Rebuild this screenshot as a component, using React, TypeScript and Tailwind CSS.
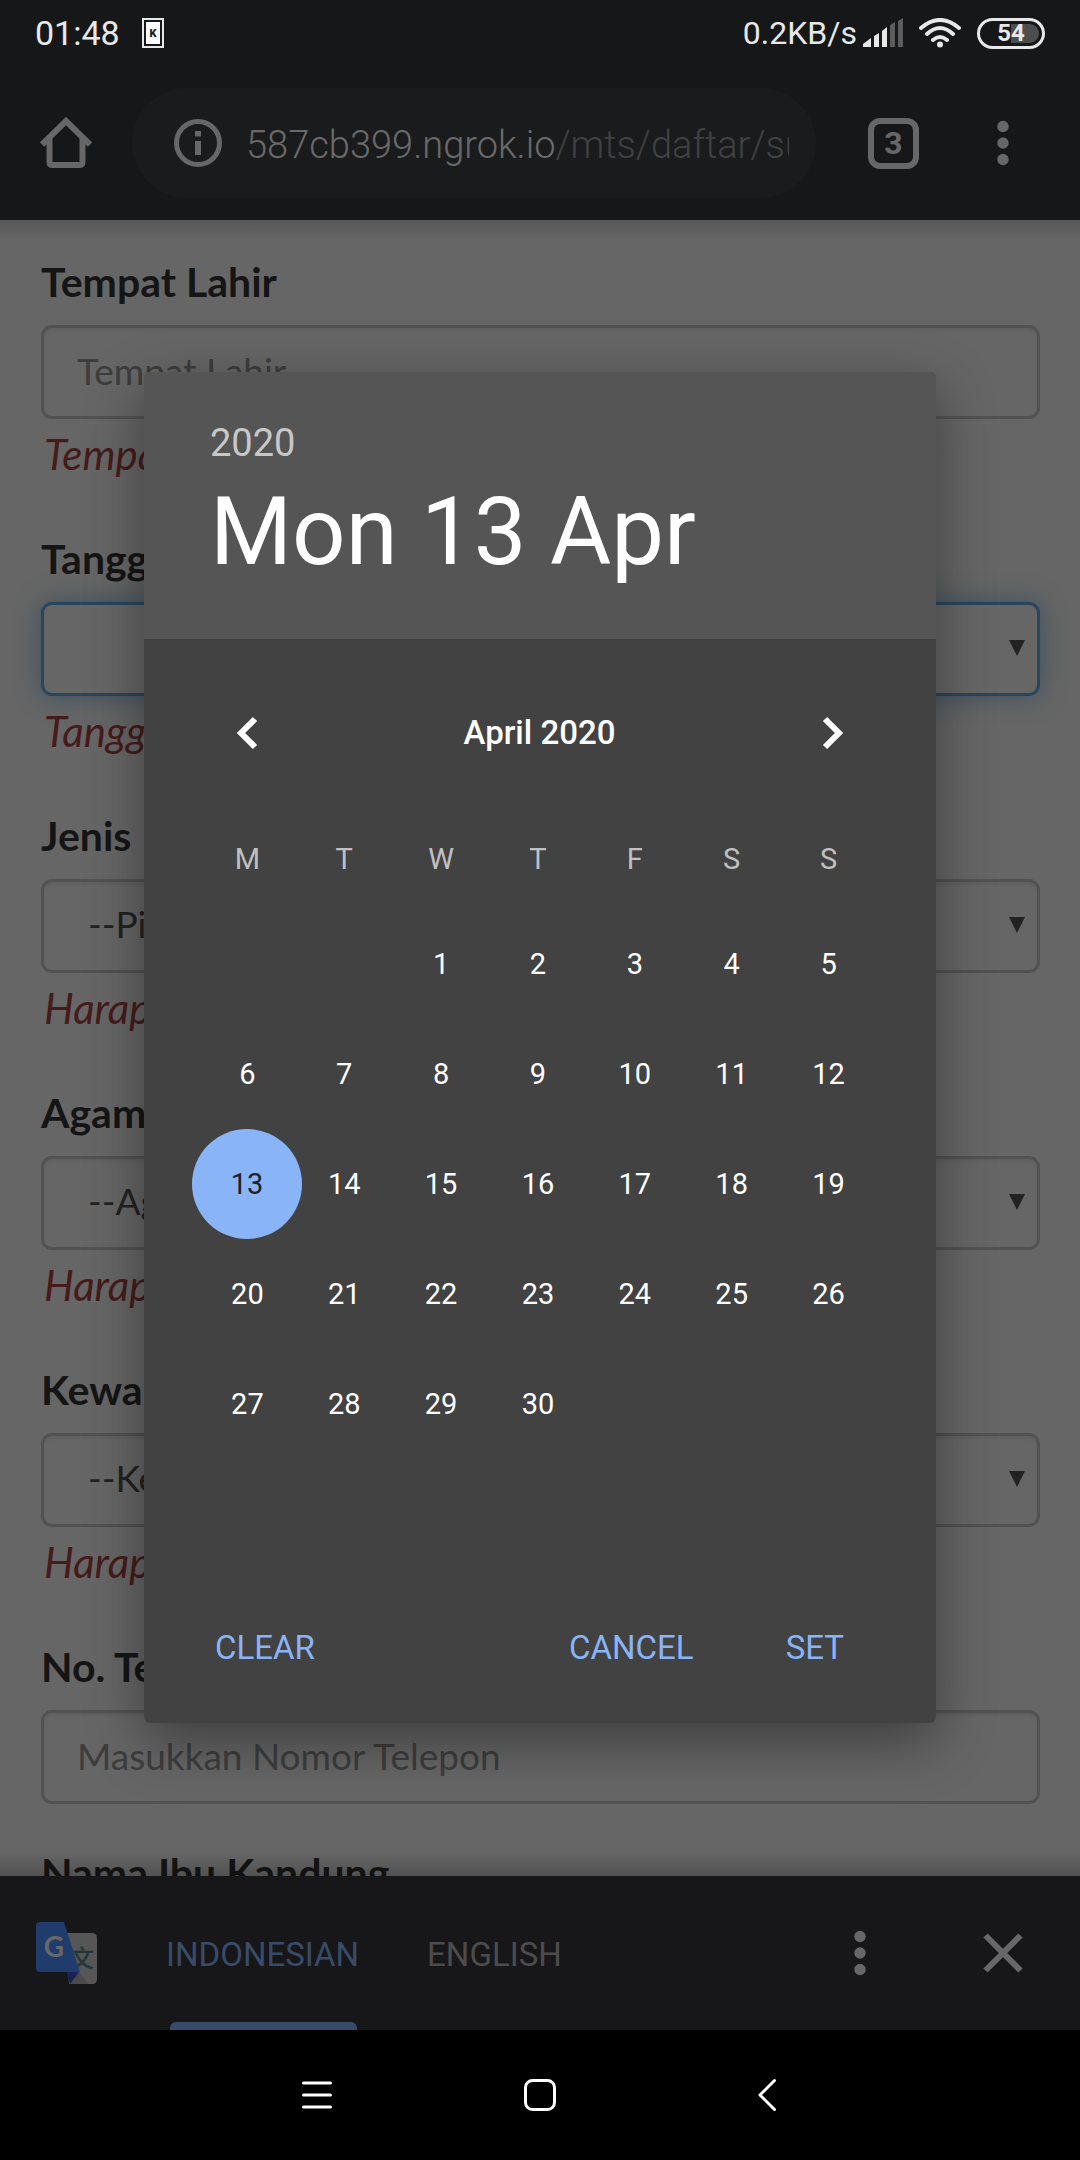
import { useId, type ReactNode } from "react";

const PAGE_FONT = "font-[Lato,'Noto_Sans',sans-serif]";

function StatusBar() {
  return (
    <header className="flex h-[66px] shrink-0 items-center justify-between pr-[35px] pl-[35px] text-[#e8e8e8]">
      <div className="flex items-center gap-[22px]">
        <time className="text-[34px] leading-10">01:48</time>
        <svg className="h-[30px] w-[22px]" viewBox="0 0 22 30" aria-hidden="true">
          <rect x="1" y="1" width="20" height="28" fill="#161718" stroke="#e8e8e8" strokeWidth="2" />
          <rect x="4" y="4" width="14" height="22" fill="#fff" />
          <text x="11" y="19" textAnchor="middle" fontSize="11" fontWeight="900" fill="#222">K</text>
        </svg>
      </div>
      <div className="flex items-center">
        <span className="pr-1.5 text-[32px] leading-10">0.2KB/s</span>
        <svg className="h-[30px] w-10" viewBox="0 0 40 30" aria-label="Signal">
          <path d="M0 29v-3l8-6v9zM11 29V18l5-3v14zM19 29V13l5-4v20z" fill="#e8e8e8" />
          <path d="M27 29V7l5-3v25zM35 29V3l5-3v29z" fill="#5c5c5c" />
        </svg>
        <svg className="ml-4 h-[30px] w-[42px]" viewBox="0 0 42 30" fill="none" stroke="#e8e8e8" strokeWidth="4" strokeLinecap="round" aria-label="Wi-Fi">
          <path d="M2 10Q21 -6 40 10M8 16Q21 4 34 16M14 22Q21 16 28 22" />
          <circle cx="21" cy="26.500" r="3" fill="#e8e8e8" stroke="none" />
        </svg>
        <span className="ml-4 flex h-[31px] w-[68px] items-center justify-center rounded-full border-3 border-[#e8e8e8] p-[3px]">
          <span className="flex h-full w-full items-center justify-center rounded-full bg-linear-to-r from-transparent from-50% to-[#4c4e4e] to-50% text-[24px] leading-5 font-bold">
            54
          </span>
        </span>
      </div>
    </header>
  );
}

function Dots() {
  return (
    <svg className="h-12 w-12" viewBox="0 0 48 48" fill="#676767" aria-hidden="true">
      <circle cx="24" cy="7.500" r="5.700" />
      <circle cx="24" cy="24" r="5.700" />
      <circle cx="24" cy="40.500" r="5.700" />
    </svg>
  );
}

function Toolbar() {
  return (
    <div className="flex h-[154px] shrink-0 items-center">
      <button aria-label="Home" className="flex w-33 justify-center">
        <svg className="h-[52px] w-[52px]" viewBox="0 0 52 52" fill="none" stroke="#676767" strokeWidth="6" strokeLinejoin="round" aria-hidden="true">
          <path d="M2 27.500 L26 4 L50 27.500" strokeLinejoin="miter" />
          <path d="M9.500 21V45Q9.500 48 12.500 48H39.500Q42.500 48 42.500 45V21" />
        </svg>
      </button>
      <div className="flex h-[110px] min-w-0 flex-1 items-center rounded-full bg-[#1a1b1d] pr-[27px] pl-[42px]">
        <svg className="h-12 w-12 shrink-0" viewBox="0 0 48 48" fill="none" stroke="#676767" aria-label="Site information">
          <circle cx="24" cy="24" r="21.500" strokeWidth="5" />
          <path d="M24 12v5.500M24 22v14" strokeWidth="6" />
        </svg>
        <span className="ml-6 min-w-0 flex-1 overflow-hidden pt-1 text-[38px] leading-12 font-light whitespace-nowrap text-[#404142]">
          <span className="text-[#6a6a6a]">587cb399.ngrok.io</span>/mts/daftar/su
        </span>
      </div>
      <button aria-label="Tabs" className="ml-[52px] flex h-[51px] w-[51px] items-center justify-center rounded-xl border-6 border-[#676767] text-[32px] leading-8 font-bold text-[#676767]">
        3
      </button>
      <button aria-label="Menu" className="mr-[53px] ml-[60px]">
        <Dots />
      </button>
    </div>
  );
}

const BOX =
  "block h-[94px] w-full appearance-none rounded-[11px] border-3 bg-transparent pb-1 text-[37px] outline-none placeholder:text-[#3d3d3d] placeholder:opacity-100";
const PLAIN = "border-[#525252] shadow-[inset_0_3px_3px_rgba(0,0,0,0.06)]";
const FOCUSED = "border-[#29465d] shadow-[0_0_24px_rgba(41,70,93,0.7)]";

function Field({ label, help, arrow, children }: { label: string; help?: string; arrow?: boolean; children: (id: string) => ReactNode }) {
  const id = useId();
  return (
    <div className="mb-[33px]">
      <label htmlFor={id} className="block pt-[3px] pb-[11px] text-[41px] leading-[65px] font-bold text-[#151515]">
        {label}
      </label>
      <div className="relative">
        {children(id)}
        {arrow && (
          <svg className="pointer-events-none absolute top-[38px] right-[15px] h-4 w-4" viewBox="0 0 16 16" aria-hidden="true">
            <path d="M0 0h16L8 16z" fill="#222" />
          </svg>
        )}
      </div>
      {help && <p className="pl-[3px] text-[42px] leading-[71px] text-[#461b1b] italic">{help}</p>}
    </div>
  );
}

function SelectField({ label, help, option }: { label: string; help: string; option: string }) {
  return (
    <Field label={label} help={help} arrow>
      {(id) => (
        <select id={id} className={`${BOX} ${PLAIN} px-11 text-[#222]`}>
          <option>{option}</option>
        </select>
      )}
    </Field>
  );
}

function Form() {
  return (
    <main className={`relative min-h-0 flex-1 overflow-hidden bg-[#666] ${PAGE_FONT}`}>
      <form className="pt-[26px] pr-10 pl-[41px]">
        <Field label="Tempat Lahir" help="Tempat Lahir harus diisi">
          {(id) => <input id={id} placeholder="Tempat Lahir" className={`${BOX} ${PLAIN} px-[33px]`} />}
        </Field>
        <Field label="Tanggal Lahir" help="Tanggal Lahir harus diisi" arrow>
          {(id) => <input id={id} readOnly className={`${BOX} ${FOCUSED} px-[33px]`} />}
        </Field>
        <SelectField label="Jenis Kelamin" help="Harap pilih jenis kelamin" option="--Pilih Jenis Kelamin--" />
        <SelectField label="Agama" help="Harap pilih agama" option="--Agama--" />
        <SelectField label="Kewarganegaraan" help="Harap pilih kewarganegaraan" option="--Kewarganegaraan--" />
        <Field label="No. Telepon">
          {(id) => <input id={id} type="tel" placeholder="Masukkan Nomor Telepon" className={`${BOX} ${PLAIN} px-[33px]`} />}
        </Field>
        <Field label="Nama Ibu Kandung">{(id) => <input id={id} className={`${BOX} ${PLAIN} px-[33px]`} />}</Field>
      </form>
      <div className="absolute inset-x-0 top-0 h-5 bg-linear-to-b from-black/15 to-transparent" />
      <div className="absolute inset-x-0 bottom-0 h-6 bg-linear-to-t from-black/20 to-transparent" />
    </main>
  );
}

function TranslateIcon() {
  return (
    <svg className="h-[62px] w-[62px] shrink-0" viewBox="0 0 62 62" aria-label="Google Translate">
      <path d="M30 11h26q5 0 5 5v41q0 5-5 5H33z" fill="#565656" />
      <path d="M31 13L43 50L52 62H33L29 20z" fill="#4b4b4b" />
      <text x="46" y="45" textAnchor="middle" fontSize="24" fontWeight="500" fontFamily="'Noto Sans CJK SC', sans-serif" fill="#263638">文</text>
      <path d="M30 49h14L34 62z" fill="#1a2250" />
      <path d="M4 0H28L44 50H4q-4 0-4-4V4q0-4 4-4z" fill="#1f3c6c" />
      <text x="18" y="35" textAnchor="middle" fontSize="28" fontWeight="700" fontFamily="Lato, sans-serif" fill="#676767">G</text>
    </svg>
  );
}

function TranslateBar() {
  return (
    <div className="flex h-[154px] shrink-0 items-center bg-[#171719] pl-9 text-[33px] leading-10">
      <TranslateIcon />
      <div role="tablist" className="ml-[65px] flex h-full gap-[65px]">
        <button role="tab" aria-selected="true" className="relative h-full px-[3px] pt-[3px] text-[#384b68]">
          INDONESIAN
          <span className="absolute right-[5px] bottom-0 left-[7px] h-2 rounded-t-md bg-[#384b68]" />
        </button>
        <button role="tab" aria-selected="false" className="h-full pt-[3px] text-[#4c4c4c]">
          ENGLISH
        </button>
      </div>
      <button aria-label="More options" className="ml-auto">
        <Dots />
      </button>
      <button aria-label="Close" className="mr-[53px] ml-[95px]">
        <svg className="h-12 w-12" viewBox="0 0 48 48" fill="none" stroke="#676767" strokeWidth="6" aria-hidden="true">
          <path d="M6.500 6.500l35 35M41.500 6.500l-35 35" />
        </svg>
      </button>
    </div>
  );
}

function SystemNav() {
  return (
    <nav className="flex h-[130px] shrink-0 items-center justify-center gap-40 bg-black">
      <button aria-label="Recent apps">
        <svg className="h-16 w-16" viewBox="0 0 64 64" stroke="#fff" strokeWidth="3" strokeLinecap="round" aria-hidden="true">
          <path d="M19.500 20h27M19.500 32h27M19.500 44h27" />
        </svg>
      </button>
      <button aria-label="Home screen">
        <svg className="h-16 w-16" viewBox="0 0 64 64" fill="none" stroke="#fff" strokeWidth="3" aria-hidden="true">
          <rect x="17.500" y="17.500" width="29" height="29" rx="7" />
        </svg>
      </button>
      <button aria-label="Back">
        <svg className="h-16 w-16" viewBox="0 0 64 64" fill="none" stroke="#fff" strokeWidth="3" strokeLinecap="round" strokeLinejoin="round" aria-hidden="true">
          <path d="M42.500 17.500L28 32l14.500 14.500" />
        </svg>
      </button>
    </nav>
  );
}

const WEEKDAYS = ["M", "T", "W", "T", "F", "S", "S"];
const WEEKS: (number | null)[][] = [
  [null, null, 1, 2, 3, 4, 5],
  [6, 7, 8, 9, 10, 11, 12],
  [13, 14, 15, 16, 17, 18, 19],
  [20, 21, 22, 23, 24, 25, 26],
  [27, 28, 29, 30, null, null, null],
];

function Chevron({ d }: { d: string }) {
  return (
    <svg className="h-12 w-12" viewBox="0 0 48 48" fill="none" stroke="#fff" strokeWidth="6" aria-hidden="true">
      <path d={d} />
    </svg>
  );
}

function DatePicker() {
  return (
    <div className="absolute inset-0 flex items-center px-36 pt-16 pb-[129px]">
      <div role="dialog" aria-label="Choose a date" className="w-full overflow-hidden rounded-md bg-[#424242] shadow-[0_18px_56px_rgba(0,0,0,0.4)]">
        <div className="h-[267px] bg-[#555] px-[66px] pt-[49px]">
          <p className="text-[38px] leading-11 text-[#c8c8c8]">2020</p>
          <p className="text-[94px] leading-[134px] text-white">Mon 13 Apr</p>
        </div>
        <div className="pr-[59px] pl-[55px]">
          <div className="flex h-47 items-center justify-between pr-[19px] pl-[22px] text-white">
            <button aria-label="Previous month"><Chevron d="M34 10L20 24l14 14" /></button>
            <h2 className="text-[33px] leading-10 font-medium">April 2020</h2>
            <button aria-label="Next month"><Chevron d="M15 10L29 24L15 38" /></button>
          </div>
          <table className="w-full table-fixed text-center text-[29px] leading-8">
            <thead>
              <tr className="h-[82px] align-top text-[#c0c0c0]">
                {WEEKDAYS.map((d, i) => (
                  <th key={i} scope="col" className="pt-4 font-normal">{d}</th>
                ))}
              </tr>
            </thead>
            <tbody className="text-white">
              {WEEKS.map((week, w) => (
                <tr key={w} className="h-[110px]">
                  {week.map((day, i) => (
                    <td key={i} className="p-0">
                      {day && (
                        <button
                          className={
                            day === 13
                              ? "-mx-[7px] block h-[110px] w-[110px] rounded-full bg-[#8ab4f8] text-[#202124]"
                              : "h-[110px] w-full"
                          }
                        >
                          {day}
                        </button>
                      )}
                    </td>
                  ))}
                </tr>
              ))}
            </tbody>
          </table>
          <div className="flex h-[264px] items-end pr-[33px] pb-[51px] pl-4 text-[33px] leading-12 text-[#8ab4f8]">
            <button>CLEAR</button>
            <button className="ml-auto">CANCEL</button>
            <button className="ml-[92px]">SET</button>
          </div>
        </div>
      </div>
    </div>
  );
}

export default function App() {
  return (
    <div className="relative flex h-screen flex-col overflow-hidden bg-[#161718] font-[Roboto,sans-serif]">
      <StatusBar />
      <Toolbar />
      <Form />
      <TranslateBar />
      <SystemNav />
      <DatePicker />
    </div>
  );
}
